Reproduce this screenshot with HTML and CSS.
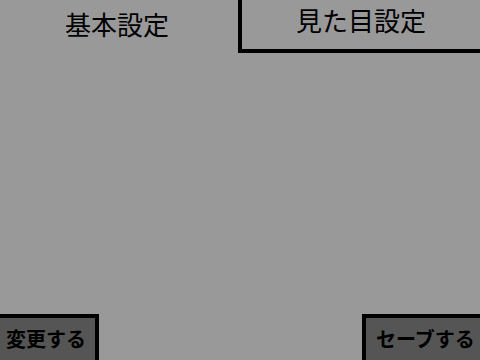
FILE: index.html
```html
<!DOCTYPE html>
<html>
<head>
    <title>設定</title>
    <link rel="stylesheet" href="styles.css">
</head>
<body>
    <div class="screen">
        <div class="tabs">
            <div class="tab active">基本設定</div>
            <div class="tab">見た目設定</div>
        </div>
        <div class="content"></div>
        <div class="footer">
            <button class="action left">変更する</button>
            <button class="action right">セーブする</button>
        </div>
    </div>
</body>
</html>
```

FILE: styles.css
```css
body {
    margin: 0;
    padding: 0;
    background: #999999;
    overflow: hidden;
    font-family: "Noto Sans CJK JP", "Noto Sans", sans-serif;
}

.screen {
    width: 480px;
    height: 360px;
    display: flex;
    flex-direction: column;
}

.tabs {
    display: flex;
    height: 53px;
}

.tab {
    display: flex;
    align-items: center;
    justify-content: center;
    font-size: 26px;
    color: #000;
    box-sizing: border-box;
}

.tab.active {
    width: 238px;
    padding-bottom: 6px;
    padding-right: 4px;
}

.tab:not(.active) {
    flex: 1;
    border-left: 4px solid #000;
    border-bottom: 4px solid #000;
    padding-bottom: 10px;
}

.content {
    flex-grow: 1;
}

.footer {
    display: flex;
    justify-content: space-between;
    align-items: flex-end;
}

.action {
    height: 46px;
    background: #555555;
    border: 4px solid #000;
    border-bottom: none;
    color: #000;
    font-family: inherit;
    font-size: 20px;
    font-weight: bold;
    white-space: nowrap;
    padding: 0 0 2px 0;
    margin: 0;
    box-sizing: border-box;
    text-align: left;
}

.action.left {
    border-left: none;
    width: 99px;
    padding-left: 6px;
}

.action.right {
    border-right: none;
    width: 118px;
    padding-left: 10px;
}
```
